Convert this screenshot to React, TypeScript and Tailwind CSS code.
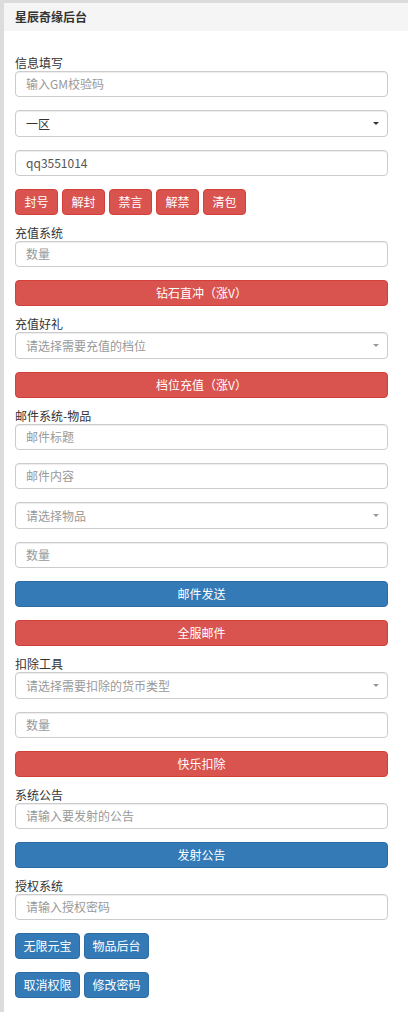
import React from 'react';

const font = { fontFamily: '"Noto Sans CJK SC", "Liberation Sans", sans-serif' };

function Label({ text }: { text: string }) {
  return <div className="h-[16px] text-[12px] leading-[16px] text-[#333]">{text}</div>;
}

function Input({ placeholder, value }: { placeholder?: string; value?: string }) {
  return (
    <div className="flex h-[26px] items-center rounded-[4px] border border-[#ccc] bg-white px-[10px] text-[12px] shadow-[inset_0_1px_1px_rgba(0,0,0,0.075)]">
      {value ? <span className="text-[#555]">{value}</span> : <span className="text-[#999]">{placeholder}</span>}
    </div>
  );
}

function Select({ text, placeholder }: { text: string; placeholder?: boolean }) {
  return (
    <div className="flex h-[27px] items-center justify-between rounded-[4px] border border-[#ccc] bg-white pl-[10px] pr-[8px] text-[12px] shadow-[inset_0_1px_1px_rgba(0,0,0,0.075)]">
      <span className={placeholder ? 'text-[#999]' : 'text-[#333]'}>{text}</span>
      <span
        className={
          'h-0 w-0 border-x-[3px] border-t-[3px] border-x-transparent ' +
          (placeholder ? 'border-t-[#999]' : 'border-t-[#333]')
        }
      />
    </div>
  );
}

function Btn({ text, color, wide }: { text: string; color: 'red' | 'blue'; wide?: boolean }) {
  const c =
    color === 'red'
      ? 'bg-[#d9534f] border-[#d43f3a]'
      : 'bg-[#337ab7] border-[#2e6da4]';
  return (
    <div
      className={
        'flex h-[26px] items-center justify-center rounded-[4px] border text-[12px] text-white ' +
        c +
        (wide ? ' w-full' : '')
      }
    >
      {text}
    </div>
  );
}

function SmallBtn({ text, color, w }: { text: string; color: 'red' | 'blue'; w: string }) {
  const c =
    color === 'red'
      ? 'bg-[#d9534f] border-[#d43f3a]'
      : 'bg-[#337ab7] border-[#2e6da4]';
  return (
    <div className={'flex h-[26px] items-center justify-center rounded-[4px] border text-[12px] text-white ' + c + ' ' + w}>
      {text}
    </div>
  );
}

export default function App() {
  return (
    <div className="min-h-[1012px] bg-[#dcdcdc] pl-[3px] pt-[2px]" style={font}>
      <div className="min-h-[1010px] border-l border-t border-[#ddd] bg-white">
        <div className="flex h-[28px] items-center bg-[#f5f5f5] pl-[11px] text-[12px] font-bold text-[#333]">
          星辰奇缘后台
        </div>
        <div className="flex flex-col pl-[11px] pr-[20px] pt-[24px]">
          <Label text="信息填写" />
          <div className="flex flex-col gap-[13px]">
            <Input placeholder="输入GM校验码" />
            <Select text="一区" />
            <Input value="qq3551014" />
            <div className="flex gap-[4px]">
              <SmallBtn text="封号" color="red" w="w-[43px]" />
              <SmallBtn text="解封" color="red" w="w-[43px]" />
              <SmallBtn text="禁言" color="red" w="w-[43px]" />
              <SmallBtn text="解禁" color="red" w="w-[43px]" />
              <SmallBtn text="清包" color="red" w="w-[43px]" />
            </div>
          </div>

          <div className="mt-[10px]">
            <Label text="充值系统" />
          </div>
          <div className="flex flex-col gap-[13px]">
            <Input placeholder="数量" />
            <Btn text="钻石直冲（涨V）" color="red" wide />
          </div>

          <div className="mt-[10px]">
            <Label text="充值好礼" />
          </div>
          <div className="flex flex-col gap-[13px]">
            <Select text="请选择需要充值的档位" placeholder />
            <Btn text="档位充值（涨V）" color="red" wide />
          </div>

          <div className="mt-[10px]">
            <Label text="邮件系统-物品" />
          </div>
          <div className="flex flex-col gap-[13px]">
            <Input placeholder="邮件标题" />
            <Input placeholder="邮件内容" />
            <Select text="请选择物品" placeholder />
            <Input placeholder="数量" />
            <Btn text="邮件发送" color="blue" wide />
            <Btn text="全服邮件" color="red" wide />
          </div>

          <div className="mt-[10px]">
            <Label text="扣除工具" />
          </div>
          <div className="flex flex-col gap-[13px]">
            <Select text="请选择需要扣除的货币类型" placeholder />
            <Input placeholder="数量" />
            <Btn text="快乐扣除" color="red" wide />
          </div>

          <div className="mt-[10px]">
            <Label text="系统公告" />
          </div>
          <div className="flex flex-col gap-[13px]">
            <Input placeholder="请输入要发射的公告" />
            <Btn text="发射公告" color="blue" wide />
          </div>

          <div className="mt-[10px]">
            <Label text="授权系统" />
          </div>
          <div className="flex flex-col gap-[13px]">
            <Input placeholder="请输入授权密码" />
            <div className="flex gap-[4px]">
              <SmallBtn text="无限元宝" color="blue" w="w-[65px]" />
              <SmallBtn text="物品后台" color="blue" w="w-[65px]" />
            </div>
            <div className="flex gap-[4px]">
              <SmallBtn text="取消权限" color="blue" w="w-[65px]" />
              <SmallBtn text="修改密码" color="blue" w="w-[65px]" />
            </div>
          </div>
        </div>
      </div>
    </div>
  );
}
